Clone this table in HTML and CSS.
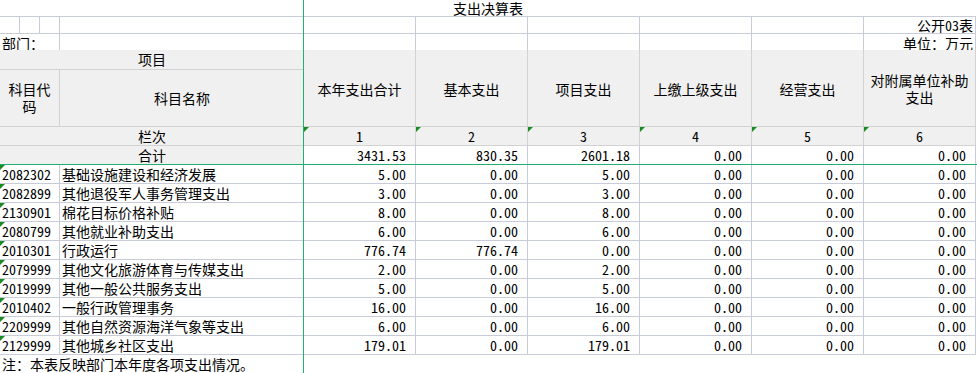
FILE: index.html
```html
<!DOCTYPE html>
<html lang="zh-CN">
<head>
<meta charset="utf-8">
<title>支出决算表</title>
<link rel="stylesheet" href="styles.css">
</head>
<body>
<div class="sheet">
  <div class="grid">
    <div class="c title">支出决算表</div>

    <div class="c top br bb"></div>
    <div class="c top br bb"></div>
    <div class="c top br bb"></div>
    <div class="c top br bb"></div>
    <div class="c top br bb"></div>
    <div class="c top br bb"></div>
    <div class="c top br bb"></div>
    <div class="c top br bb"></div>
    <div class="c top br bb"></div>
    <div class="c top br bb right">公开03表</div>

    <div class="c dept br">部门：</div>
    <div class="c top br"></div>
    <div class="c top br"></div>
    <div class="c top br"></div>
    <div class="c top br"></div>
    <div class="c top br"></div>
    <div class="c top br"></div>
    <div class="c unit br right">单位：万元</div>

    <div class="c h hbb span4">项目</div>
    <div class="c h hbr hbb tall">本年支出合计</div>
    <div class="c h hbr hbb tall">基本支出</div>
    <div class="c h hbr hbb tall">项目支出</div>
    <div class="c h hbr hbb tall">上缴上级支出</div>
    <div class="c h hbr hbb tall">经营支出</div>
    <div class="c h hbr hbb tall">对附属单位补助<br>支出</div>
    <div class="c h hbr hbb span3">科目代<br>码</div>
    <div class="c h hbb">科目名称</div>

    <div class="c h hbb span4">栏次</div>
    <div class="c h hbr hbb tri">1</div>
    <div class="c h hbr hbb tri">2</div>
    <div class="c h hbr hbb tri">3</div>
    <div class="c h hbr hbb tri">4</div>
    <div class="c h hbr hbb tri">5</div>
    <div class="c h hbr hbb tri">6</div>

    <div class="c h span4">合计</div>
    <div class="c num br bb">3431.53</div>
    <div class="c num br bb">830.35</div>
    <div class="c num br bb">2601.18</div>
    <div class="c num br bb">0.00</div>
    <div class="c num br bb">0.00</div>
    <div class="c num br bb">0.00</div>

    <div class="c code br bb tri">2082302</div><div class="c name br bb">基础设施建设和经济发展</div>
    <div class="c num br bb">5.00</div><div class="c num br bb">0.00</div><div class="c num br bb">5.00</div><div class="c num br bb">0.00</div><div class="c num br bb">0.00</div><div class="c num br bb">0.00</div>

    <div class="c code br bb tri">2082899</div><div class="c name br bb">其他退役军人事务管理支出</div>
    <div class="c num br bb">3.00</div><div class="c num br bb">0.00</div><div class="c num br bb">3.00</div><div class="c num br bb">0.00</div><div class="c num br bb">0.00</div><div class="c num br bb">0.00</div>

    <div class="c code br bb tri">2130901</div><div class="c name br bb">棉花目标价格补贴</div>
    <div class="c num br bb">8.00</div><div class="c num br bb">0.00</div><div class="c num br bb">8.00</div><div class="c num br bb">0.00</div><div class="c num br bb">0.00</div><div class="c num br bb">0.00</div>

    <div class="c code br bb tri">2080799</div><div class="c name br bb">其他就业补助支出</div>
    <div class="c num br bb">6.00</div><div class="c num br bb">0.00</div><div class="c num br bb">6.00</div><div class="c num br bb">0.00</div><div class="c num br bb">0.00</div><div class="c num br bb">0.00</div>

    <div class="c code br bb tri">2010301</div><div class="c name br bb">行政运行</div>
    <div class="c num br bb">776.74</div><div class="c num br bb">776.74</div><div class="c num br bb">0.00</div><div class="c num br bb">0.00</div><div class="c num br bb">0.00</div><div class="c num br bb">0.00</div>

    <div class="c code br bb tri">2079999</div><div class="c name br bb">其他文化旅游体育与传媒支出</div>
    <div class="c num br bb">2.00</div><div class="c num br bb">0.00</div><div class="c num br bb">2.00</div><div class="c num br bb">0.00</div><div class="c num br bb">0.00</div><div class="c num br bb">0.00</div>

    <div class="c code br bb tri">2019999</div><div class="c name br bb">其他一般公共服务支出</div>
    <div class="c num br bb">5.00</div><div class="c num br bb">0.00</div><div class="c num br bb">5.00</div><div class="c num br bb">0.00</div><div class="c num br bb">0.00</div><div class="c num br bb">0.00</div>

    <div class="c code br bb tri">2010402</div><div class="c name br bb">一般行政管理事务</div>
    <div class="c num br bb">16.00</div><div class="c num br bb">0.00</div><div class="c num br bb">16.00</div><div class="c num br bb">0.00</div><div class="c num br bb">0.00</div><div class="c num br bb">0.00</div>

    <div class="c code br bb tri">2209999</div><div class="c name br bb">其他自然资源海洋气象等支出</div>
    <div class="c num br bb">6.00</div><div class="c num br bb">0.00</div><div class="c num br bb">6.00</div><div class="c num br bb">0.00</div><div class="c num br bb">0.00</div><div class="c num br bb">0.00</div>

    <div class="c code br bb tri">2129999</div><div class="c name br bb">其他城乡社区支出</div>
    <div class="c num br bb">179.01</div><div class="c num br bb">0.00</div><div class="c num br bb">179.01</div><div class="c num br bb">0.00</div><div class="c num br bb">0.00</div><div class="c num br bb">0.00</div>

    <div class="c note">注：本表反映部门本年度各项支出情况。</div>
  </div>
  <div class="freeze-v"></div>
  <div class="freeze-h"></div>
</div>
</body>
</html>
```

FILE: styles.css
```css
* {
  box-sizing: border-box;
  margin: 0;
  padding: 0;
}

body {
  margin: 0;
  background: #ffffff;
  color: #000000;
  font-family: "Noto Sans CJK SC", "Noto Sans", sans-serif;
  font-size: 14px;
  font-feature-settings: "hwid" 1;
}

.sheet {
  position: relative;
  width: 977px;
  height: 373px;
  overflow: hidden;
}

.grid {
  display: grid;
  grid-template-columns: 20px 20px 20px 244px repeat(6, 112px);
  grid-template-rows: 17px 17px 16px 20px 57px 19px 19px repeat(10, 19px) 19px;
}

.c {
  position: relative;
  overflow: hidden;
  white-space: nowrap;
  line-height: 16px;
}

.br { border-right: 1px solid #c8ccd8; }
.bb { border-bottom: 1px solid #c8ccd8; }
.hbr { border-right: 1px solid #d2d2d2; }
.hbb { border-bottom: 1px solid #d2d2d2; }

.title {
  grid-column: 1 / -1;
  text-align: center;
  border-bottom: 1px solid #c8ccd8;
  line-height: 16px;
}

.top {
  line-height: 17px;
}

.right {
  text-align: right;
  padding-right: 2px;
}

.dept {
  grid-column: span 3;
  line-height: 19px;
  padding-left: 2px;
}

.unit {
  line-height: 18px;
}

.h {
  background: #f0f0f0;
  display: flex;
  align-items: center;
  justify-content: center;
  text-align: center;
  line-height: 17px;
  white-space: normal;
}

.span4 { grid-column: span 4; }
.span3 { grid-column: span 3; }
.tall { grid-row: span 2; padding-top: 2px; }

.num {
  text-align: right;
  padding-right: 9px;
  line-height: 19px;
}

.code {
  grid-column: span 3;
  padding-left: 2px;
  line-height: 19px;
}

.name {
  padding-left: 2px;
  line-height: 19px;
}

.note {
  grid-column: 1 / -1;
  padding-left: 2px;
  line-height: 19px;
}

.tri::before {
  content: "";
  position: absolute;
  left: 0;
  top: 0;
  width: 0;
  height: 0;
  border-top: 5px solid #1a8a24;
  border-right: 5px solid transparent;
}

.freeze-v {
  position: absolute;
  left: 303px;
  top: 0;
  width: 1px;
  height: 373px;
  background: #22b072;
}

.freeze-h {
  position: absolute;
  left: 0;
  top: 164px;
  width: 977px;
  height: 1px;
  background: #22b072;
}
```
